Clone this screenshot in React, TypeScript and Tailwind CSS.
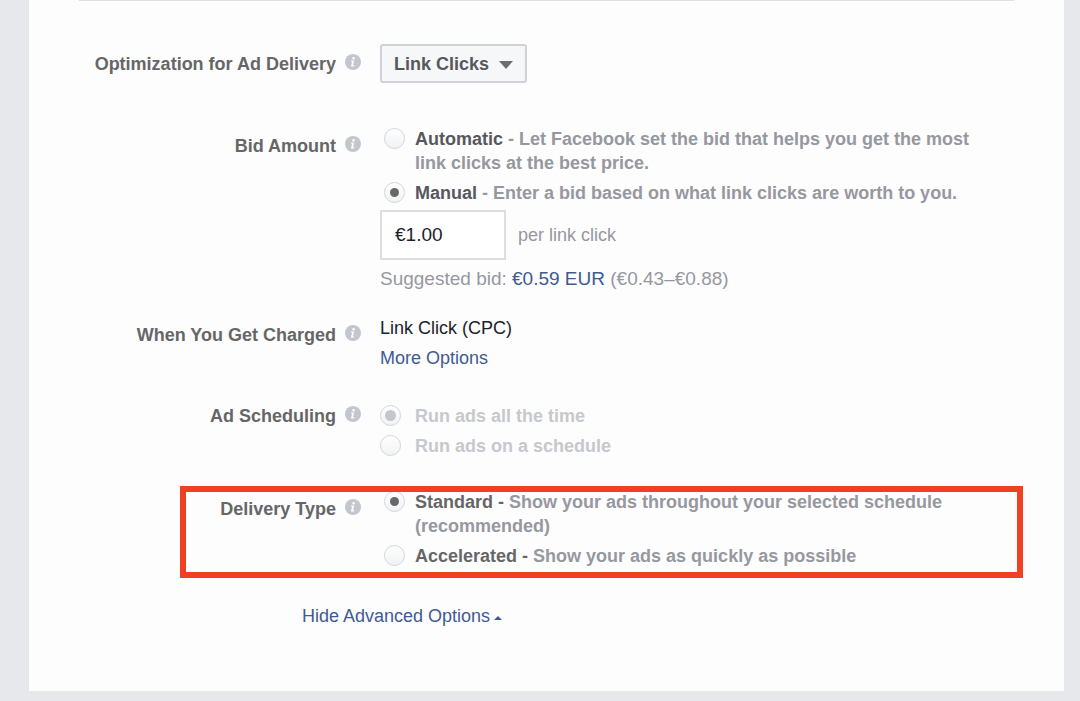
import type { ReactNode } from "react";

interface FieldRowProps {
  label: string;
  labelClass?: string;
  className?: string;
  htmlFor?: string;
  children: ReactNode;
}

interface RadioOptionProps {
  name: string;
  title?: string;
  titleClass?: string;
  text: string;
  checked?: boolean;
  disabled?: boolean;
}

function InfoIcon() {
  return (
    <svg viewBox="0 0 16 16" className="size-4 shrink-0 -mt-1" aria-hidden="true">
      <circle cx="8" cy="8" r="8" fill="#c3c6cd" />
      <circle cx="8.6" cy="4.2" r="1.3" fill="#fff" />
      <path d="M6.2 6.6h3L8 11.2h1.2v1.3H5.9l1.2-4.7h-.9z" fill="#fff" />
    </svg>
  );
}

function FieldRow({ label, labelClass = "pt-[7px]", className = "", htmlFor, children }: FieldRowProps) {
  const labelText = "text-[#666668] font-bold";

  return (
    <div
      role={htmlFor ? undefined : "group"}
      aria-label={htmlFor ? undefined : label}
      className={`relative flex gap-[19px] ${className}`}
    >
      <div className={`w-[282px] shrink-0 flex justify-end ${labelClass}`}>
        <div className="flex items-center gap-[9px] h-6 whitespace-nowrap">
          {htmlFor ? (
            <label htmlFor={htmlFor} className={labelText}>
              {label}
            </label>
          ) : (
            <span className={labelText}>{label}</span>
          )}
          <InfoIcon />
        </div>
      </div>
      <div className="flex-1 min-w-0 pr-6">{children}</div>
    </div>
  );
}

function RadioOption({ name, title, titleClass = "text-[#56585d]", text, checked, disabled }: RadioOptionProps) {
  return (
    <label className={`flex ${disabled ? "gap-[14px]" : "gap-[10px] pl-1"}`}>
      <span className="relative size-[21px] shrink-0 mt-px grid place-items-center">
        <input
          type="radio"
          name={name}
          defaultChecked={checked}
          disabled={disabled}
          className="peer absolute inset-0 appearance-none rounded-full border border-[#d3d5da] bg-linear-to-b from-white to-[#f1f2f4]"
        />
        <span
          className={`relative rounded-full hidden peer-checked:block ${
            disabled ? "size-[11px] bg-[#c3c6cc]" : "size-[9px] bg-[#66686c]"
          }`}
        />
      </span>
      <span className={`font-bold ${disabled ? "text-[#c6c8ce]" : "text-[#96989f]"}`}>
        {title && <span className={titleClass}>{title}</span>} {text}
      </span>
    </label>
  );
}

export default function App() {
  return (
    <div className="min-h-screen bg-[#e7e8eb] pl-[29px] pr-4 pb-[10px] font-['Liberation_Sans',Arial,sans-serif] text-[18px] leading-6">
      <main className="bg-[#fdfdfd] px-[50px] pb-[63px]">
        <hr className="border-t border-[#dfe0e4]" />

        <FieldRow label="Optimization for Ad Delivery" labelClass="pt-2" className="mt-[43px]" htmlFor="optimization">
          <div className="relative w-fit">
            <select
              id="optimization"
              className="block appearance-none h-[39px] w-[147px] pl-3 pr-8 rounded-[3px] border-2 border-[#d0d2d8] bg-[#f6f7f8] font-bold text-[#56585d]"
            >
              <option>Link Clicks</option>
            </select>
            <svg
              viewBox="0 0 14 8"
              className="absolute right-[14px] top-[17px] w-[14px] h-2 pointer-events-none"
              aria-hidden="true"
            >
              <path d="M0 0h14L7 8z" fill="#6a6d74" />
            </svg>
          </div>
        </FieldRow>

        <FieldRow label="Bid Amount" className="mt-11">
          <div className="flex flex-col gap-[6px]">
            <RadioOption
              name="bid"
              title="Automatic"
              text="- Let Facebook set the bid that helps you get the most link clicks at the best price."
            />
            <RadioOption
              name="bid"
              title="Manual"
              text="- Enter a bid based on what link clicks are worth to you."
              checked
            />
          </div>
          <div className="flex items-center gap-3 mt-[5px]">
            <input
              type="text"
              id="bid-value"
              defaultValue="€1.00"
              className="h-[50px] w-[126px] px-[13px] border-2 border-[#dcdee3] bg-white text-[19px] text-[#1d2129]"
            />
            <label htmlFor="bid-value" className="text-[#96989f]">
              per link click
            </label>
          </div>
          <p className="mt-[7px] text-[19px] text-[#96989f]">
            Suggested bid:{" "}
            <a href="#suggested" className="text-[#3f5a94]">
              €0.59 EUR
            </a>{" "}
            (€0.43–€0.88)
          </p>
        </FieldRow>

        <FieldRow label="When You Get Charged" className="mt-[25px]">
          <div className="flex flex-col items-start gap-[6px]">
            <span className="text-[#1d2129]">Link Click (CPC)</span>
            <a href="#more" className="text-[#3f5a94]">
              More Options
            </a>
          </div>
        </FieldRow>

        <FieldRow label="Ad Scheduling" labelClass="" className="mt-[34px]">
          <div className="flex flex-col gap-[6px]">
            <RadioOption name="schedule" text="Run ads all the time" checked disabled />
            <RadioOption name="schedule" text="Run ads on a schedule" disabled />
          </div>
        </FieldRow>

        <FieldRow label="Delivery Type" className="mt-8">
          <div className="flex flex-col gap-[6px]">
            <RadioOption
              name="delivery"
              title="Standard -"
              titleClass="text-[#666668]"
              text="Show your ads throughout your selected schedule (recommended)"
              checked
            />
            <RadioOption
              name="delivery"
              title="Accelerated -"
              titleClass="text-[#666668]"
              text="Show your ads as quickly as possible"
            />
          </div>
          <div className="absolute left-[101px] -right-[9px] -top-1 -bottom-[10px] border-6 border-[#f04023] pointer-events-none" />
        </FieldRow>

        <div className="mt-9 pl-[223px]">
          <a href="#advanced" className="inline-flex items-center gap-1 text-[#3f5a94]">
            Hide Advanced Options
            <svg viewBox="0 0 8 4" className="w-2 h-1 mt-1" aria-hidden="true">
              <path d="M0 4h8L4 0z" fill="#3f5a94" />
            </svg>
          </a>
        </div>
      </main>
    </div>
  );
}
